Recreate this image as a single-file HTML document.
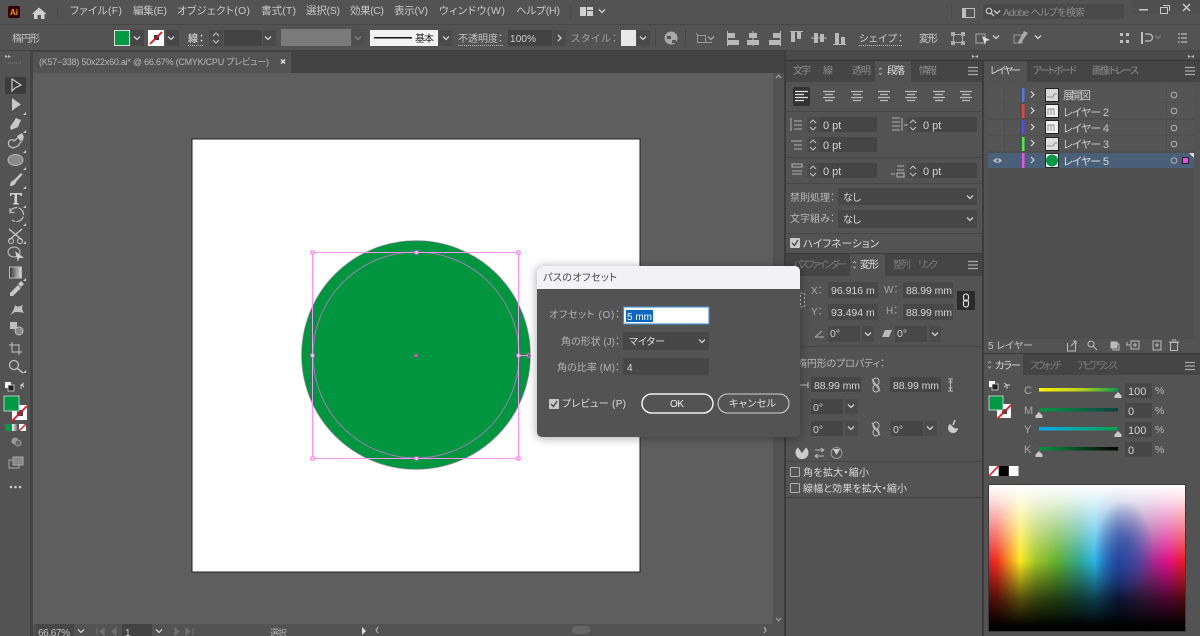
<!DOCTYPE html>
<html><head><meta charset="utf-8"><style>
html,body{margin:0;padding:0;background:#535353;width:1200px;height:636px;overflow:hidden}
svg{display:block;filter:blur(.35px)}
svg svg{filter:none}
text{font-family:"Liberation Sans","Noto Sans CJK JP",sans-serif;font-size:10px;fill:#c4c4c4;font-feature-settings:"palt"}
.m{font-size:10.5px;fill:#c8c8c8}
.d{fill:#8c8c8c}
.w{fill:#dcdcdc}
.l{font-size:11px;fill:#d4d4d4}
</style></head><body>
<svg width="1200" height="636" viewBox="0 0 1200 636" xmlns="http://www.w3.org/2000/svg">
<defs>
<path id="ch" d="M-3-1.500 0 1.500 3-1.500" fill="none" stroke="#cfcfcf" stroke-width="1.300"/>
<path id="sp" d="M-3-2 0-5 3-2M-3 2 0 5 3 2" fill="none" stroke="#bdbdbd" stroke-width="1.100"/>
<path id="tri" d="M0 3 3 0V3Z" fill="#c8c8c8"/>
<g id="mn"><path d="M-5-3.500h10M-5 0h10M-5 3.500h10" stroke="#aaa" stroke-width="1.300" fill="none"/></g>
<g id="lk"><path d="M-4-6 4 6" stroke="#bbb" stroke-width="1.200" fill="none"/><rect x="-3" y="-7" width="6" height="7" rx="3" fill="none" stroke="#bbb"/><rect x="-3" y="0" width="6" height="7" rx="3" fill="none" stroke="#bbb"/></g>
<g id="al"><path d="M-6-4.500H6M-4-1.500H4M-6 1.500H6M-4 4.500H4" stroke="#bbb" stroke-width="1.300" fill="none"/></g>
<linearGradient id="gc"><stop offset="0" stop-color="#fff200"/><stop offset=".55" stop-color="#b5cf20"/><stop offset="1" stop-color="#00a14b"/></linearGradient>
<linearGradient id="gm"><stop offset="0" stop-color="#009a44"/><stop offset="1" stop-color="#123f42"/></linearGradient>
<linearGradient id="gy"><stop offset="0" stop-color="#00aeef"/><stop offset="1" stop-color="#00a14b"/></linearGradient>
<linearGradient id="gk"><stop offset="0" stop-color="#009a44"/><stop offset="1" stop-color="#000"/></linearGradient>
<linearGradient id="hue">
<stop offset="0" stop-color="#ed1c24"/><stop offset=".04" stop-color="#f03020"/><stop offset=".16" stop-color="#fbe820"/><stop offset=".24" stop-color="#a0c428"/><stop offset=".35" stop-color="#5fb030"/><stop offset=".46" stop-color="#30a890"/><stop offset=".54" stop-color="#29b6ea"/><stop offset=".66" stop-color="#1c3f9e"/><stop offset=".78" stop-color="#7a3a96"/><stop offset=".91" stop-color="#e0108c"/><stop offset="1" stop-color="#ed1c24"/>
</linearGradient>
<linearGradient id="vv" x2="0" y2="1"><stop offset="0" stop-color="#fff"/><stop offset=".1" stop-color="#fff" stop-opacity=".86"/><stop offset=".52" stop-color="#fff" stop-opacity="0"/><stop offset=".52" stop-color="#000" stop-opacity="0"/><stop offset=".78" stop-color="#000" stop-opacity=".66"/><stop offset=".97" stop-color="#000"/><stop offset="1" stop-color="#000"/></linearGradient>
<radialGradient id="bb"><stop offset="0" stop-color="#2a4aa0" stop-opacity=".75"/><stop offset="1" stop-color="#2a4aa0" stop-opacity="0"/></radialGradient>
<filter id="sh" x="-10%" y="-15%" width="120%" height="130%"><feDropShadow dx="0" dy="1" stdDeviation="5" flood-color="#000" flood-opacity=".35"/></filter>
<linearGradient id="tg"><stop offset="0" stop-color="#333"/><stop offset="1" stop-color="#ddd"/></linearGradient>
<linearGradient id="tb"><stop offset="0" stop-color="#fff"/><stop offset="1" stop-color="#555"/></linearGradient>
</defs>

<!-- base -->
<rect width="1200" height="636" fill="#535353"/>
<rect x="0" y="24" width="1200" height="1" fill="#474747"/>
<rect x="0" y="50" width="1200" height="1" fill="#424242"/>
<rect x="33" y="51" width="751" height="22" fill="#434343"/>
<rect x="33" y="52" width="258" height="21" fill="#535353"/>
<rect x="33" y="73" width="740" height="551" fill="#5e5e5e"/>
<rect x="773" y="73" width="11" height="551" fill="#535353"/>
<rect x="30" y="51" width="3" height="585" fill="#444"/>
<rect x="784" y="51" width="2" height="585" fill="#3d3d3d"/>
<rect x="982" y="51" width="2" height="585" fill="#3d3d3d"/>
<rect x="786" y="51" width="414" height="9" fill="#4a4a4a"/>
<rect x="786" y="60" width="414" height="1" fill="#333"/>

<!-- menu bar -->
<rect x="8" y="6" width="12" height="12" rx="2" fill="#330000"/>
<text x="10" y="15" style="font-size:8px;font-weight:bold;fill:#ff9a00">Ai</text>
<path d="M39 7.500 46.500 14H44.500V19H41V15H37.500V19H34V14H32Z" fill="#d0d0d0"/>
<rect x="57" y="4" width="1" height="15" fill="#4a4a4a"/>
<text class="m" x="70" y="14" textLength="52">ファイル(F)</text>
<text class="m" x="133" y="14" textLength="34">編集(E)</text>
<text class="m" x="177" y="14" textLength="73">オブジェクト(O)</text>
<text class="m" x="261" y="14" textLength="35">書式(T)</text>
<text class="m" x="306" y="14" textLength="34">選択(S)</text>
<text class="m" x="350" y="14" textLength="34">効果(C)</text>
<text class="m" x="394" y="14" textLength="34">表示(V)</text>
<text class="m" x="439" y="14" textLength="66">ウィンドウ(W)</text>
<text class="m" x="516" y="14" textLength="44">ヘルプ(H)</text>
<rect x="570" y="4" width="1" height="15" fill="#4a4a4a"/>
<path d="M580 7h6v9h-6zM587 7h6v3h-6zM587 11h6v5h-6z" fill="#cfcfcf"/>
<use href="#ch" x="602" y="11"/>
<rect x="951" y="4" width="1" height="15" fill="#4a4a4a"/>
<rect x="962.500" y="8.500" width="12" height="9" fill="none" stroke="#bdbdbd"/><rect x="963" y="9" width="3" height="8" fill="#bdbdbd"/>
<rect x="983" y="4" width="141" height="15" rx="2" fill="#494949"/>
<circle cx="989" cy="11" r="2.800" fill="none" stroke="#c8c8c8" stroke-width="1.200"/><path d="M991 13 994 16" stroke="#c8c8c8" stroke-width="1.300"/>
<use href="#ch" x="997" y="12"/>
<text x="1003" y="16" class="d" textLength="82">Adobe ヘルプを検索</text>
<rect x="1132" y="0" width="68" height="14" rx="2" fill="#4f4f4f"/>
<rect x="1139" y="9" width="9" height="1.500" fill="#c8c8c8"/>
<rect x="1160.500" y="7.500" width="7" height="6" fill="none" stroke="#c8c8c8"/><path d="M1163 5.500h6.500v5.500" fill="none" stroke="#c8c8c8"/>
<path d="M1183 4 1190 11M1190 4 1183 11" stroke="#c8c8c8" stroke-width="1.500"/>

<!-- control bar -->
<text x="12" y="42" textLength="28" style="fill:#c4c4c4">楕円形</text>
<rect x="114" y="30" width="16" height="16" fill="#d8d8d8"/><rect x="115" y="31" width="14" height="14" fill="#009a44"/>
<rect x="131" y="30" width="13" height="16" fill="#474747"/><use href="#ch" x="137" y="38"/>
<rect x="148" y="30" width="16" height="16" fill="#fff"/><rect x="154" y="35" width="5" height="5" fill="#333"/><path d="M150 44 162 32" stroke="#e81020" stroke-width="1.800"/>
<rect x="166" y="30" width="13" height="16" fill="#474747"/><use href="#ch" x="171" y="38"/>
<text x="188" y="42" textLength="16" style="font-weight:bold">線：</text>
<path d="M188 45.500h16" stroke="#bbb" stroke-dasharray="1 1"/>
<rect x="209" y="30" width="14" height="16" fill="#4a4a4a"/><use href="#sp" x="216" y="38"/>
<rect x="224" y="30" width="38" height="16" fill="#434343"/>
<rect x="263" y="30" width="13" height="16" fill="#4a4a4a"/><use href="#ch" x="268" y="38"/>
<rect x="281" y="29" width="70" height="17" fill="#7a7a7a"/>
<rect x="352" y="29" width="13" height="17" fill="#4f4f4f"/><use href="#ch" x="358" y="38" opacity=".4"/>
<rect x="370" y="30" width="68" height="16" fill="#f2f2f2"/><rect x="374" y="37" width="38" height="1.500" fill="#111"/>
<text x="415" y="42" textLength="19" style="fill:#222">基本</text>
<rect x="439" y="30" width="13" height="16" fill="#4a4a4a"/><use href="#ch" x="446" y="38"/>
<text x="458" y="42" textLength="45">不透明度：</text>
<path d="M458 45.500h45" stroke="#bbb" stroke-dasharray="1 1"/>
<rect x="508" y="30" width="44" height="16" fill="#434343"/>
<text x="510" y="42" textLength="26" style="fill:#d0d0d0">100%</text>
<rect x="553" y="30" width="13" height="16" fill="#4a4a4a"/><path d="M558 35 561 38 558 41" fill="none" stroke="#cfcfcf" stroke-width="1.300"/>
<text x="571" y="42" textLength="46" style="fill:#a0a0a0">スタイル：</text>
<rect x="621" y="30" width="15" height="16" fill="#e8e8e8"/>
<rect x="637" y="30" width="13" height="16" fill="#4a4a4a"/><use href="#ch" x="643" y="38"/>
<rect x="655" y="28" width="1" height="19" fill="#484848"/>
<circle cx="671" cy="38" r="6.500" fill="#a8a8a8"/><path d="M667 36h4v3h-4zM672 40h4v3h-4z" fill="#555"/>
<rect x="685" y="28" width="1" height="19" fill="#484848"/>
<rect x="697.500" y="35.500" width="8" height="7" fill="none" stroke="#999"/><path d="M696 33 698 35.500M705 42.500h7" stroke="#999"/><use href="#ch" x="711" y="38" opacity=".7"/>
<g fill="#b8b8b8">
<path d="M727 31h1v15h-1zM728 33h7v5h-7zM728 40h11v5h-11z"/>
<path d="M752.500 31h1v15h-1zM749 33h8v5h-8zM747 40h12v5h-12z"/>
<path d="M780 31h1v15h-1zM773 33h7v5h-7zM769 40h11v5h-11z"/>
<path d="M790 31h13v1h-13zM791 32h4v10h-4zM797 32h4v7h-4z"/>
<path d="M811 37.500h16v1h-16zM814 33h4v10h-4zM820 34h4v8h-4z"/>
<path d="M833 44h13v1h-13zM835 33h4v11h-4zM841 37h4v7h-4z"/>
</g>
<text x="859" y="42" textLength="44" style="fill:#cfcfcf">シェイプ：</text>
<path d="M859 45.500h44" stroke="#bbb" stroke-dasharray="1 1"/>
<text x="919" y="42" textLength="19" style="fill:#cfcfcf">変形</text>
<path d="M953.500 34.500h9v8h-9z" fill="none" stroke="#aaa"/><path d="M951 32h4v4h-4zM961 32h4v4h-4zM951 41h4v4h-4zM961 41h4v4h-4z" fill="#aaa"/>
<path d="M976 34h9v9h-9z" fill="none" stroke="#aaa"/><path d="M982 36 990 40 986 41 985 45Z" fill="#ddd"/><use href="#ch" x="996" y="37"/>
<path d="M1014 35h8v8h-8z" fill="none" stroke="#999"/><path d="M1020 44 1028 33 1024 31 1018 42Z" fill="#aaa"/><use href="#ch" x="1038" y="37"/>
<path d="M1120 33h3v3h-3zM1126 33h3v3h-3zM1120 40h3v3h-3zM1126 40h3v3h-3z" fill="#c0c0c0"/>
<path d="M1141 32h2v12h-2z" fill="#c0c0c0"/><path d="M1145 34h4a3 3 0 0 1 0 7h-4" fill="none" stroke="#c0c0c0" stroke-width="1.200"/>
<use href="#ch" x="1158" y="37" opacity=".35"/>
<path d="M1178 34h2M1178 38h2M1178 42h2M1181 34h6M1181 38h6M1181 42h6" stroke="#bbb" stroke-width="1.200"/>
<text x="972" y="58" style="font-size:6px;fill:#bbb">▸◂</text>
<text x="1188" y="58" style="font-size:6px;fill:#bbb">▸◂</text>

<!-- doc tab -->
<text x="39" y="65" textLength="230" style="font-size:9px;fill:#b8b8b8">(K57−338) 50x22x60.ai* @ 66.67% (CMYK/CPU プレビュー)</text>
<path d="M281 59.500 285 63.500M285 59.500 281 63.500" stroke="#e0e0e0" stroke-width="1.500"/>

<!-- artboard -->
<rect x="192" y="139" width="448" height="433" fill="#fff" stroke="#222"/>
<circle cx="416" cy="355" r="114.500" fill="#009640" stroke="#c48ac4" stroke-width=".6"/>
<circle cx="416" cy="355" r="103" fill="#009640" stroke="#a080b0" stroke-width="1"/>
<rect x="312.500" y="252.500" width="206" height="206" fill="none" stroke="#ff90ff" stroke-width="1"/>
<g fill="#fff" stroke="#ff66ee">
<rect x="311" y="251" width="3" height="3"/><rect x="415" y="251" width="3" height="3"/><rect x="517" y="251" width="3" height="3"/>
<rect x="311" y="354" width="3" height="3"/><rect x="517" y="354" width="3" height="3"/>
<rect x="311" y="457" width="3" height="3"/><rect x="415" y="457" width="3" height="3"/><rect x="517" y="457" width="3" height="3"/>
</g>
<rect x="414.500" y="354" width="3" height="3" fill="#f040d0"/>
<path d="M519 355.500h9" stroke="#ff90ff"/><circle cx="528.500" cy="355.500" r="1.800" fill="none" stroke="#ff66ee"/>

<!-- toolbar -->
<text x="5" y="58" style="font-size:6px;fill:#bbb">▸▸</text>
<path d="M8 63h14" stroke="#6a6a6a" stroke-dasharray="1 1" stroke-width="2"/>
<rect x="5" y="77" width="21" height="17" rx="2" fill="#3c3c3c"/>
<path d="M12 79V91L15 88 21 85Z" fill="none" stroke="#ccc" stroke-width="1.200"/>
<path d="M12 98V111L15.500 108 21 104.500Z" fill="#c8c8c8"/>
<path d="M10 127 16 118 21 120 18 127 11 130Z" fill="#c8c8c8"/>
<path d="M9 146C7 140 12 138 14 141L20 136 23 139 18 146 13 148Z" fill="none" stroke="#bbb" stroke-width="1.300"/><path d="M17 136 22 133 24 137 20 141Z" fill="#c8c8c8"/>
<ellipse cx="15.500" cy="160" rx="7.500" ry="5.500" fill="#8a8a8a" stroke="#b8b8b8"/>
<path d="M10 186C10 182 12 181 14 180L21 173 22.500 174.500 16 182C15 185 13 186 10 186Z" fill="#c8c8c8"/>
<path d="M10 193h12v3h-1.500l-.5-1.500h-3V203h1.800v1.500h-5.600V203H14.500v-8.500h-3L11 196H10Z" fill="#d0d0d0"/>
<path d="M10 212A7 7 0 1 1 12 220" fill="none" stroke="#bbb" stroke-width="1.300" stroke-dasharray="9 1.500"/><path d="M10 208v4.500h4.500" fill="none" stroke="#bbb" stroke-width="1.200"/>
<path d="M9 229 22 240M22 229 9 240" stroke="#c8c8c8" stroke-width="1.300"/><circle cx="11" cy="241" r="2.500" fill="none" stroke="#c8c8c8"/><circle cx="20" cy="241" r="2.500" fill="none" stroke="#c8c8c8"/>
<ellipse cx="14" cy="252" rx="6" ry="5" fill="none" stroke="#c0c0c0"/><path d="M15 251 24 258 19 258 18 262Z" fill="#d0d0d0"/>
<rect x="9.500" y="267" width="12" height="11" fill="url(#tg)" stroke="#bbb"/>
<path d="M10 293 18 285 21 288 13 296 10 296ZM18 284 21 281 24 284 21 287Z" fill="#c8c8c8"/>
<path d="M10 315C13 312 14 309 15 305 18 308 20 306 23 305 21 309 23 311 24 313 20 312 18 312 15 312Z" fill="#c0c0c0"/>
<rect x="10" y="322" width="7" height="7" fill="#c0c0c0"/><circle cx="19" cy="331" r="4" fill="#888" stroke="#c0c0c0"/>
<path d="M12 342V352H22M9 345H19V355" fill="none" stroke="#b0b0b0" stroke-width="1.200"/>
<circle cx="14" cy="365" r="4.500" fill="none" stroke="#c0c0c0" stroke-width="1.300"/><path d="M17.500 368.500 23 373" stroke="#c0c0c0" stroke-width="1.500"/>
<use href="#tri" x="23" y="112"/><use href="#tri" x="23" y="130"/><use href="#tri" x="23" y="150"/><use href="#tri" x="23" y="167"/><use href="#tri" x="23" y="186"/><use href="#tri" x="23" y="205"/><use href="#tri" x="23" y="223"/><use href="#tri" x="23" y="241"/><use href="#tri" x="23" y="278"/><use href="#tri" x="23" y="370"/>
<rect x="5" y="382" width="6" height="6" fill="#fff"/><rect x="8" y="385" width="6" height="6" fill="#222" stroke="#ddd" stroke-width=".8"/>
<path d="M21 389V385H24M24 383 21 385 24 387" fill="none" stroke="#c8c8c8"/>
<rect x="12" y="405" width="15" height="15" fill="#fff"/><rect x="17" y="410" width="6" height="6" fill="#444"/><path d="M12 421 27 406" stroke="#e81020" stroke-width="1.800"/>
<rect x="4" y="396" width="15" height="15" fill="#009a44" stroke="#ddd" stroke-width=".8"/>
<rect x="5" y="424" width="7" height="7" fill="#009a44"/>
<rect x="12" y="424" width="6" height="7" fill="url(#tb)"/><rect x="19" y="424" width="7" height="7" fill="#fff"/><path d="M19 431 26 424" stroke="#e81020" stroke-width="1.300"/>
<circle cx="15" cy="441" r="3.500" fill="#999"/><circle cx="18" cy="443" r="3" fill="#666" stroke="#999"/>
<rect x="9" y="460" width="10" height="8" fill="none" stroke="#aaa"/><rect x="13" y="457" width="10" height="8" fill="#888" stroke="#aaa"/>
<circle cx="11" cy="487" r="1.300" fill="#ccc"/><circle cx="15.500" cy="487" r="1.300" fill="#ccc"/><circle cx="20" cy="487" r="1.300" fill="#ccc"/>

<!-- status bar -->
<rect x="33" y="624" width="740" height="12" fill="#535353"/>
<rect x="36" y="624" width="38" height="12" fill="#474747"/>
<text x="38" y="636" textLength="32" style="font-size:10px">66.67%</text>
<use href="#ch" x="81" y="631"/>
<path d="M97 628v7M104 628l-4 3.500 4 3.500ZM116 628l-4 3.500 4 3.500Z" fill="#707070" stroke="#707070"/>
<rect x="122" y="624" width="30" height="12" fill="#434343"/>
<text x="125" y="636" style="font-size:10px">1</text>
<use href="#ch" x="159" y="631"/>
<path d="M175 628l4 3.500-4 3.500ZM186 628l4 3.500-4 3.500ZM193 628v7" fill="#707070" stroke="#707070"/>
<text x="270" y="636" textLength="17" style="font-size:9px;fill:#b0b0b0">選択</text>
<path d="M362 627l4 4-4 4Z" fill="#ddd"/>
<path d="M378 627l-2 3 2 3" fill="none" stroke="#bbb"/>
<rect x="572" y="626" width="18" height="8" rx="4" fill="#666"/>
<path d="M764 627l2 3-2 3" fill="none" stroke="#bbb"/>
<path d="M776 78l2.500-3 2.500 3M776 618l2.500 3 2.500-3" fill="none" stroke="#aaa"/>

<!-- left panel tabs -->
<rect x="786" y="61" width="196" height="21" fill="#454545"/>
<rect x="875" y="61" width="36" height="21" fill="#535353"/>
<text x="793" y="74" textLength="18" class="d">文字</text>
<text x="823" y="74" class="d">線</text>
<text x="852" y="74" textLength="19" class="d">透明</text>
<path d="M879 69.500l1.500-1.500 1.500 1.500M879 73l1.500 1.500L882 73" fill="none" stroke="#bbb" stroke-width=".8"/>
<text x="887" y="74" textLength="18" class="w">段落</text>
<text x="919" y="74" textLength="18" class="d">情報</text>
<use href="#mn" x="973" y="71"/>
<!-- para -->
<rect x="793" y="87" width="17" height="19" rx="2" fill="#333"/>
<g stroke="#e0e0e0"><path d="M795 91.500h13M795 94.500h9M795 97.500h13M795 100.500h9" stroke-width="1.300"/></g>
<use href="#al" x="829" y="96"/><use href="#al" x="857" y="96"/><use href="#al" x="884" y="96"/><use href="#al" x="911" y="96"/><use href="#al" x="939" y="96"/><use href="#al" x="966" y="96"/>
<rect x="786" y="111" width="196" height="1" fill="#484848"/>
<rect x="807" y="117" width="13" height="15" fill="#4a4a4a"/><rect x="820" y="117" width="57" height="15" fill="#454545"/><use href="#sp" x="813" y="125"/>
<rect x="907" y="117" width="13" height="15" fill="#4a4a4a"/><rect x="920" y="117" width="57" height="15" fill="#454545"/><use href="#sp" x="913" y="125"/>
<rect x="807" y="137" width="13" height="15" fill="#4a4a4a"/><rect x="820" y="137" width="57" height="15" fill="#454545"/><use href="#sp" x="813" y="145"/>
<rect x="807" y="163" width="13" height="15" fill="#4a4a4a"/><rect x="820" y="163" width="57" height="15" fill="#454545"/><use href="#sp" x="813" y="171"/>
<rect x="907" y="163" width="13" height="15" fill="#4a4a4a"/><rect x="920" y="163" width="57" height="15" fill="#454545"/><use href="#sp" x="913" y="171"/>
<text x="823" y="129" class="l">0 pt</text><text x="923" y="129" class="l">0 pt</text>
<text x="823" y="149" class="l">0 pt</text>
<text x="823" y="175" class="l">0 pt</text><text x="923" y="175" class="l">0 pt</text>
<g stroke="#b0b0b0" fill="none"><path d="M791 118v13M794 121h8M794 125h8M794 129h8"/><path d="M892 118h8M892 122h8M892 126h8M892 130h8M902 118v13M904 125h4"/><path d="M791 141h11M794 145h8M794 149h8"/><path d="M792 164h10v3h-10zM792 171h10M792 174h10"/><path d="M891 174h4M897 166h7M897 170h7M897 173h7v4h-7z"/></g>
<rect x="786" y="157" width="196" height="1" fill="#484848"/>
<rect x="786" y="183" width="196" height="1" fill="#484848"/>
<text x="790" y="201" textLength="45" style="fill:#b8b8b8">禁則処理：</text>
<rect x="838" y="188" width="139" height="17" fill="#474747"/><text x="843" y="201" textLength="18" class="w">なし</text><use href="#ch" x="970" y="197"/>
<text x="790" y="222" textLength="45" style="fill:#b8b8b8">文字組み：</text>
<rect x="838" y="210" width="139" height="18" fill="#474747"/><text x="843" y="223" textLength="18" class="w">なし</text><use href="#ch" x="970" y="219"/>
<rect x="786" y="233" width="196" height="1" fill="#484848"/>
<rect x="790" y="238" width="10" height="10" rx="1" fill="#c8c8c8"/><path d="M792 243 794.500 245.500 798 240" fill="none" stroke="#444" stroke-width="1.300"/>
<text x="803" y="247" textLength="76" class="w" style="font-size:10.500px">ハイフネーション</text>
<rect x="786" y="253" width="196" height="1" fill="#3a3a3a"/>
<!-- transform tabs -->
<rect x="786" y="254" width="196" height="22" fill="#454545"/>
<rect x="850" y="254" width="35" height="22" fill="#535353"/>
<text x="793" y="268" textLength="54" style="fill:#7a7a7a">パスファインダー</text>
<path d="M853 263l1.500-1.500 1.500 1.500M853 266.500l1.500 1.500 1.500-1.500" fill="none" stroke="#bbb" stroke-width=".8"/>
<text x="860" y="268" textLength="19" class="w">変形</text>
<text x="893" y="268" textLength="18" style="fill:#7a7a7a">整列</text>
<text x="918" y="268" textLength="20" style="fill:#7a7a7a">リンク</text>
<use href="#mn" x="973" y="265"/>
<rect x="828" y="282" width="50" height="16" fill="#484848"/><rect x="903" y="282" width="50" height="16" fill="#484848"/>
<rect x="828" y="304" width="50" height="16" fill="#484848"/><rect x="903" y="304" width="50" height="16" fill="#484848"/>
<rect x="828" y="326" width="32" height="16" fill="#484848"/><rect x="862" y="326" width="12" height="16" fill="#4a4a4a"/>
<rect x="895" y="326" width="32" height="16" fill="#484848"/><rect x="929" y="326" width="12" height="16" fill="#4a4a4a"/>
<svg x="828" y="282" width="47" height="40"><text x="3" y="12" style="fill:#d4d4d4;font-size:10.500px">96.916 mm</text><text x="3" y="34" style="fill:#d4d4d4;font-size:10.500px">93.494 mm</text></svg>
<text x="811" y="294" style="fill:#a8a8a8">X：</text>
<text x="811" y="315" style="fill:#a8a8a8">Y：</text>
<text x="884" y="293" style="fill:#a8a8a8">W：</text>
<text x="886" y="314" style="fill:#a8a8a8">H：</text>
<text x="906" y="294" textLength="46" style="fill:#d4d4d4;font-size:10.500px">88.99 mm</text>
<text x="906" y="316" textLength="46" style="fill:#d4d4d4;font-size:10.500px">88.99 mm</text>
<rect x="957" y="291" width="18" height="19" rx="1" fill="#2b2b2b"/>
<rect x="963.500" y="294" width="5" height="7" rx="2.500" fill="none" stroke="#ddd" stroke-width="1.200"/><rect x="963.500" y="300" width="5" height="7" rx="2.500" fill="none" stroke="#ddd" stroke-width="1.200"/>
<path d="M815 337h9M815 337 822 331" fill="none" stroke="#aaa"/>
<text x="830" y="337" style="fill:#d0d0d0;font-size:10.500px">0°</text><use href="#ch" x="868" y="334"/>
<path d="M882 337 885 330H892L889 337Z" fill="#bbb"/><text x="897" y="337" style="fill:#d0d0d0;font-size:10.500px">0°</text><use href="#ch" x="935" y="334"/>
<rect x="786" y="346" width="196" height="1" fill="#484848"/>
<text x="797" y="367" textLength="88" style="fill:#b8b8b8">楕円形のプロパティ：</text>
<rect x="811" y="377" width="50" height="15" fill="#454545"/><rect x="890" y="377" width="51" height="15" fill="#454545"/>
<text x="814" y="389" textLength="46" style="fill:#d4d4d4;font-size:10.500px">88.99 mm</text>
<text x="893" y="389" textLength="46" style="fill:#d4d4d4;font-size:10.500px">88.99 mm</text>
<use href="#lk" x="876" y="385"/>
<path d="M800 385h8M808 382v6" stroke="#bbb"/>
<path d="M948 379h5M948 391h5M950.500 379v12M948.500 382h4M948.500 388h4" stroke="#bbb" fill="none"/>
<rect x="811" y="399" width="32" height="15" fill="#454545"/><rect x="845" y="399" width="13" height="15" fill="#4a4a4a"/>
<text x="813" y="411" style="fill:#d0d0d0;font-size:10.500px">0°</text><use href="#ch" x="851" y="406"/>
<rect x="811" y="421" width="32" height="15" fill="#454545"/><rect x="845" y="421" width="13" height="15" fill="#4a4a4a"/>
<text x="813" y="433" style="fill:#d0d0d0;font-size:10.500px">0°</text><use href="#ch" x="851" y="428"/>
<use href="#lk" x="876" y="429"/>
<rect x="891" y="421" width="32" height="15" fill="#454545"/><rect x="924" y="421" width="13" height="15" fill="#4a4a4a"/>
<text x="893" y="433" style="fill:#d0d0d0;font-size:10.500px">0°</text><use href="#ch" x="930" y="428"/>
<path d="M950 424a5 5 0 1 0 8 4 4 4 0 0 1-5-1z" fill="#ccc"/><path d="M955 420 953 425" stroke="#ccc" stroke-width="1.500"/>
<path d="M802 453 798 447.500A6.500 6.500 0 1 0 806 447.500Z" fill="#ccc"/>
<path d="M815 450h9M815 456h9M821 448l3 2-3 2M818 454l-3 2 3 2" fill="none" stroke="#bbb"/>
<circle cx="836.500" cy="453" r="5.500" fill="none" stroke="#999"/><path d="M833 449 836.500 455 840 449Z" fill="#ccc"/>
<rect x="786" y="461" width="196" height="1" fill="#484848"/>
<rect x="790.500" y="467.500" width="9" height="9" rx="1" fill="none" stroke="#b0b0b0"/>
<text x="803" y="476" textLength="66" class="w">角を拡大・縮小</text>
<rect x="790.500" y="483.500" width="9" height="9" rx="1" fill="none" stroke="#b0b0b0"/>
<text x="803" y="492" textLength="104" class="w">線幅と効果を拡大・縮小</text>
<rect x="786" y="497" width="196" height="1" fill="#3f3f3f"/>

<!-- layers panel -->
<rect x="984" y="61" width="216" height="21" fill="#454545"/>
<rect x="984" y="61" width="43" height="21" fill="#535353"/>
<text x="990" y="74" textLength="31" class="w">レイヤー</text>
<text x="1033" y="74" textLength="44" class="d">アートボード</text>
<text x="1092" y="74" textLength="47" class="d">画像トレース</text>
<use href="#mn" x="1190" y="71"/>
<rect x="988" y="87" width="206" height="252" fill="#4f4f4f"/>
<g fill="#555"><rect x="988" y="87" width="16" height="15"/><rect x="1005" y="87" width="15" height="15"/><rect x="1021" y="87" width="145" height="15"/><rect x="1167" y="87" width="27" height="15"/>
<rect x="988" y="103" width="16" height="15"/><rect x="1005" y="103" width="15" height="15"/><rect x="1021" y="103" width="145" height="15"/><rect x="1167" y="103" width="27" height="15"/>
<rect x="988" y="120" width="16" height="15"/><rect x="1005" y="120" width="15" height="15"/><rect x="1021" y="120" width="145" height="15"/><rect x="1167" y="120" width="27" height="15"/>
<rect x="988" y="136" width="16" height="15"/><rect x="1005" y="136" width="15" height="15"/><rect x="1021" y="136" width="145" height="15"/><rect x="1167" y="136" width="27" height="15"/></g>
<rect x="988" y="153" width="206" height="15" fill="#4a6078"/>
<rect x="1022" y="88" width="2.500" height="14" fill="#4f79e0"/>
<rect x="1022" y="104" width="2.500" height="14" fill="#ef4040"/>
<rect x="1022" y="120" width="2.500" height="14" fill="#4f4fe8"/>
<rect x="1022" y="137" width="2.500" height="14" fill="#4fe84f"/>
<rect x="1022" y="153" width="2.500" height="15" fill="#ef4fef"/>
<path d="M1031 91.500l3 3-3 3M1031 107.500l3 3-3 3M1031 124l3 3-3 3M1031 140l3 3-3 3M1031 157l3 3-3 3" fill="none" stroke="#ddd" stroke-width="1.100"/>
<g stroke="#222" stroke-width="1"><rect x="1045.500" y="88.500" width="13" height="13" fill="#d8d8d8"/><rect x="1045.500" y="104.500" width="13" height="13" fill="#eee"/><rect x="1045.500" y="120.500" width="13" height="13" fill="#eee"/><rect x="1045.500" y="137.500" width="13" height="13" fill="#dedede"/><rect x="1045.500" y="153.500" width="13" height="14" fill="#fff"/></g>
<path d="M1047 97h6l1-3h3M1048 115v-6h6v6M1051 109v6M1048 131v-6h6v6M1051 125v6M1047 146h6l2-3h2" stroke="#777" fill="none" stroke-width=".8"/>
<circle cx="1052" cy="160.500" r="6" fill="#009a44"/>
<text x="1063" y="99" textLength="28" style="font-size:11px;fill:#c8c8c8">展開図</text>
<text x="1063" y="116" textLength="46" style="font-size:11px;fill:#c8c8c8">レイヤー 2</text>
<text x="1063" y="132" textLength="46" style="font-size:11px;fill:#c8c8c8">レイヤー 4</text>
<text x="1063" y="148" textLength="46" style="font-size:11px;fill:#c8c8c8">レイヤー 3</text>
<text x="1063" y="165" textLength="46" style="font-size:11px;fill:#dcdcdc">レイヤー 5</text>
<g fill="none" stroke="#b0b0b0" stroke-width="1"><circle cx="1174" cy="95" r="2.800"/><circle cx="1174" cy="111" r="2.800"/><circle cx="1174" cy="128" r="2.800"/><circle cx="1174" cy="144" r="2.800"/><circle cx="1174" cy="160.500" r="2.800"/></g>
<rect x="1182.500" y="157.500" width="6" height="6" fill="#ff40ee" stroke="#222"/>
<path d="M1189 153h5v5Z" fill="#ddd"/>
<path d="M993 160.500c2-3 7-3 9 0-2 3-7 3-9 0Z" fill="#bbb"/><circle cx="997.500" cy="160.500" r="1.300" fill="#4a6078"/>
<text x="988" y="349" textLength="45" style="fill:#c4c4c4">5 レイヤー</text>
<g fill="none" stroke="#bbb"><path d="M1067.500 343v8h8v-8M1071 346l5-5M1073 341h3v3"/><circle cx="1091" cy="344" r="3"/><path d="M1093 346 1097 350"/><rect x="1111" y="342" width="6" height="6" fill="#bbb"/><rect x="1113" y="344" width="6" height="6"/><path d="M1127 342v3h3M1126 345h3"/><rect x="1131" y="341" width="8" height="8"/><path d="M1135 343v4M1133 345h4"/><rect x="1153" y="341" width="8" height="9"/><path d="M1157 343v4M1155 345h4"/><rect x="1170.500" y="342.500" width="7" height="8"/><path d="M1169 342h10M1172 340h4"/></g>

<!-- color panel -->
<rect x="984" y="353" width="216" height="1" fill="#3a3a3a"/>
<rect x="984" y="354" width="216" height="21" fill="#454545"/>
<rect x="984" y="354" width="39" height="21" fill="#535353"/>
<path d="M988 363l1.500-1.500 1.500 1.500M988 366.500l1.500 1.500 1.500-1.500" fill="none" stroke="#bbb" stroke-width=".8"/>
<text x="995" y="369" textLength="26" class="w">カラー</text>
<text x="1030" y="369" textLength="32" style="fill:#7a7a7a">スウォッチ</text>
<text x="1077" y="369" textLength="41" style="fill:#7a7a7a">アピアランス</text>
<use href="#mn" x="1190" y="366"/>
<rect x="989" y="381" width="6" height="6" fill="#fff"/><rect x="992" y="384" width="6" height="6" fill="#222" stroke="#ddd" stroke-width=".8"/>
<path d="M1007 389V385H1010M1004 383l3 2-3 2" fill="none" stroke="#c8c8c8"/>
<rect x="997" y="404" width="14" height="14" fill="#fff"/><rect x="1002" y="409" width="5" height="5" fill="#444"/><path d="M997 419 1011 405" stroke="#e81020" stroke-width="1.800"/>
<rect x="989" y="396" width="14" height="14" fill="#009a44" stroke="#ddd" stroke-width=".8"/>
<text x="1024" y="394" style="fill:#a8a8a8;font-size:11px">C</text>
<text x="1024" y="414" style="fill:#a8a8a8;font-size:11px">M</text>
<text x="1024" y="433" style="fill:#a8a8a8;font-size:11px">Y</text>
<text x="1024" y="453" style="fill:#a8a8a8;font-size:11px">K</text>
<rect x="1039" y="388" width="79" height="3.500" fill="url(#gc)"/>
<rect x="1039" y="408" width="79" height="3.500" fill="url(#gm)"/>
<rect x="1039" y="427" width="79" height="3.500" fill="url(#gy)"/>
<rect x="1039" y="447" width="79" height="3.500" fill="url(#gk)"/>
<g fill="#c8c8c8">
<path d="M1114.500 398v-2.500l3.500-3.500 3.500 3.500v2.500Z"/><path d="M1035.500 418v-2.500l3.500-3.500 3.500 3.500v2.500Z"/><path d="M1114.500 437v-2.500l3.500-3.500 3.500 3.500v2.500Z"/><path d="M1035.500 457v-2.500l3.500-3.500 3.500 3.500v2.500Z"/>
</g>
<rect x="1125" y="383" width="27" height="15" fill="#474747"/><rect x="1125" y="403" width="27" height="15" fill="#474747"/><rect x="1125" y="422" width="27" height="15" fill="#474747"/><rect x="1125" y="442" width="27" height="15" fill="#474747"/>
<text x="1128" y="395" class="l">100</text><text x="1128" y="415" class="l">0</text><text x="1128" y="434" class="l">100</text><text x="1128" y="454" class="l">0</text>
<text x="1155" y="394" style="fill:#b8b8b8;font-size:10.500px">%</text><text x="1155" y="414" style="fill:#b8b8b8;font-size:10.500px">%</text><text x="1155" y="433" style="fill:#b8b8b8;font-size:10.500px">%</text><text x="1155" y="453" style="fill:#b8b8b8;font-size:10.500px">%</text>
<rect x="989" y="466" width="9.500" height="10" fill="#fff"/><path d="M989 476 998.500 466" stroke="#e81020" stroke-width="1.500"/>
<rect x="999" y="466" width="9.500" height="10" fill="#000"/><rect x="1009" y="466" width="9.500" height="10" fill="#fff"/>
<rect x="989" y="485" width="196" height="146" fill="url(#hue)"/>
<rect x="989" y="485" width="196" height="146" fill="url(#vv)"/>
<ellipse cx="1124" cy="550" rx="30" ry="48" fill="url(#bb)"/>
<rect x="988.500" y="484.500" width="197" height="147" fill="none" stroke="#3a3a3a"/>

<!-- dialog -->
<g filter="url(#sh)"><rect x="537" y="266" width="263" height="171" rx="5" fill="#535353"/></g>
<path d="M537 289V271a5 5 0 0 1 5-5H795a5 5 0 0 1 5 5V289Z" fill="#f1f1f6"/>
<text x="543" y="281" textLength="74" style="fill:#444;font-size:10px">パスのオフセット</text>
<text x="549" y="318" textLength="71" style="fill:#b4b4b4">オフセット (O)：</text>
<rect x="623.500" y="307" width="85.500" height="17" fill="#fff" stroke="#4a90d0" stroke-width="1.200"/>
<rect x="626" y="310" width="27" height="12" fill="#0a66c2"/>
<text x="627" y="320" textLength="25" style="fill:#fff">5 mm</text>
<text x="561" y="345" textLength="59" style="fill:#b4b4b4">角の形状 (J)：</text>
<rect x="623" y="332" width="86" height="18" rx="1" fill="#474747"/>
<text x="629" y="345" textLength="36" class="w">マイター</text><use href="#ch" x="702" y="341"/>
<text x="557" y="371" textLength="63" style="fill:#b4b4b4">角の比率 (M)：</text>
<rect x="623" y="358" width="86" height="17" rx="1" fill="#474747"/>
<text x="627" y="371" class="w">4</text>
<rect x="549" y="399" width="10" height="10" rx="1" fill="#c8c8c8"/><path d="M551 404 553.500 406.500 557 401" fill="none" stroke="#444" stroke-width="1.300"/>
<text x="562" y="407" textLength="64" class="w">プレビュー (P)</text>
<rect x="642" y="394" width="71" height="19" rx="9.500" fill="#535353" stroke="#f0f0f0" stroke-width="1.500"/>
<text x="670" y="407" textLength="14" style="fill:#f0f0f0">OK</text>
<rect x="718" y="394" width="71" height="19" rx="9.500" fill="#535353" stroke="#d0d0d0" stroke-width="1.100"/>
<text x="729" y="407" textLength="47" style="fill:#e4e4e4">キャンセル</text>
<rect x="800.500" y="293" width="4" height="14" fill="none" stroke="#aaa" stroke-dasharray="2 2"/>
</svg>
</body></html>
